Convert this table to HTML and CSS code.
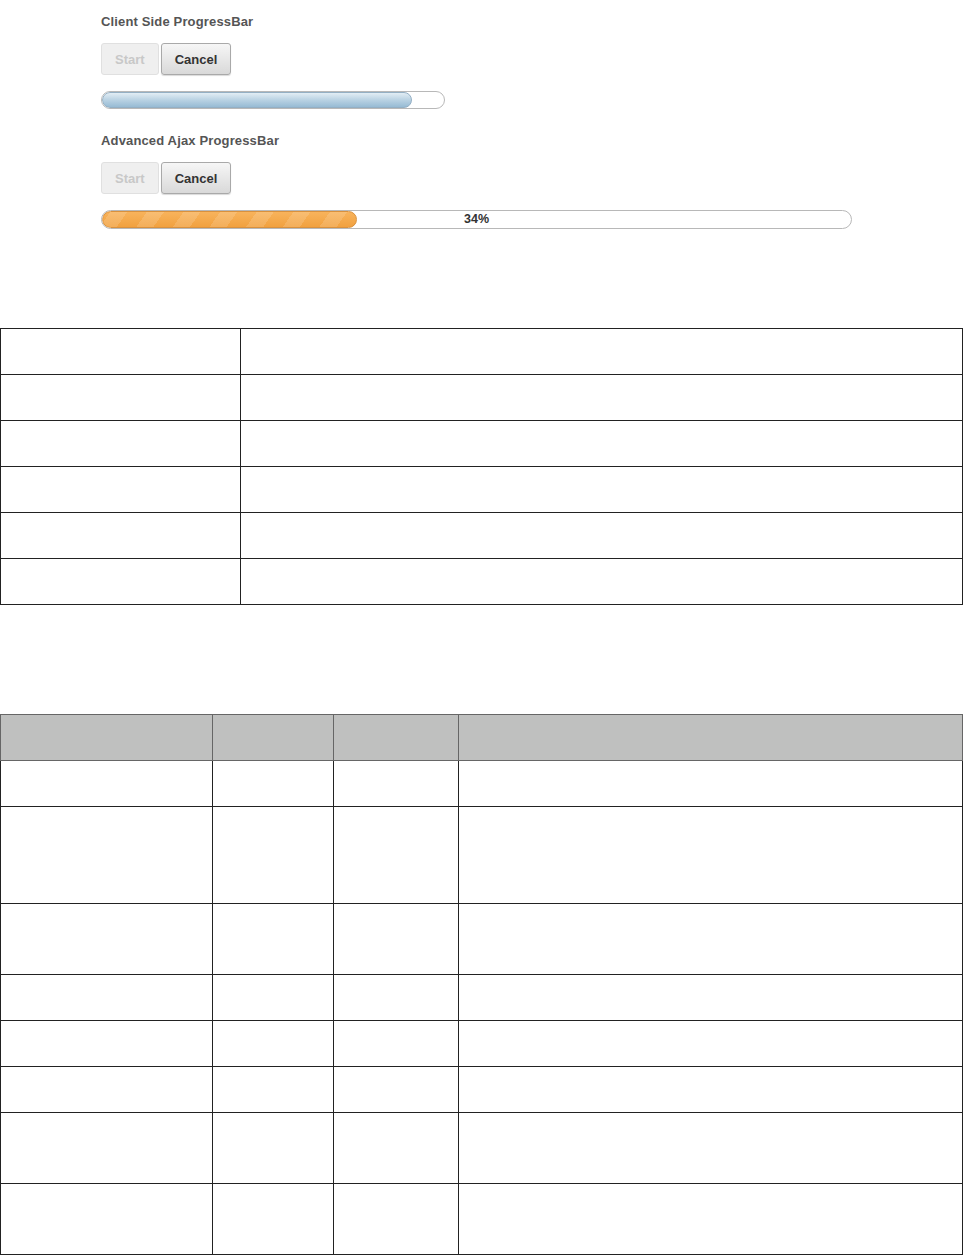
FILE: index.html
```html
<!DOCTYPE html>
<html lang="en">
<head>
    <meta charset="UTF-8">
    <title>ProgressBar</title>
    <link rel="stylesheet" href="styles.css">
</head>
<body>

<div class="demo">
    <h3>Client Side ProgressBar</h3>
    <div class="buttons">
        <button class="btn" disabled>Start</button>
        <button class="btn">Cancel</button>
    </div>
    <div class="bar bar-client">
        <div class="fill fill-blue" style="width: 310px"></div>
    </div>

    <h3 class="second">Advanced Ajax ProgressBar</h3>
    <div class="buttons">
        <button class="btn" disabled>Start</button>
        <button class="btn">Cancel</button>
    </div>
    <div class="bar bar-ajax">
        <div class="fill fill-orange" style="width: 34%"></div>
        <span class="label">34%</span>
    </div>
</div>

<table class="grid attrs">
    <tr><td class="c1"></td><td></td></tr>
    <tr><td class="c1"></td><td></td></tr>
    <tr><td class="c1"></td><td></td></tr>
    <tr><td class="c1"></td><td></td></tr>
    <tr><td class="c1"></td><td></td></tr>
    <tr><td class="c1"></td><td></td></tr>
</table>

<table class="grid api">
    <tr class="head"><th class="w1"></th><th class="w2"></th><th class="w3"></th><th></th></tr>
    <tr><td></td><td></td><td></td><td></td></tr>
    <tr class="tall"><td></td><td></td><td></td><td></td></tr>
    <tr class="mid"><td></td><td></td><td></td><td></td></tr>
    <tr><td></td><td></td><td></td><td></td></tr>
    <tr><td></td><td></td><td></td><td></td></tr>
    <tr><td></td><td></td><td></td><td></td></tr>
    <tr class="mid"><td></td><td></td><td></td><td></td></tr>
    <tr class="mid"><td></td><td></td><td></td><td></td></tr>
</table>

</body>
</html>
```

FILE: styles.css
```css
body {
    margin: 0;
    font-family: "Liberation Sans", Arial, sans-serif;
    background: #fff;
}
.demo {
    padding: 12px 0 0 101px;
}
h3 {
    margin: 0;
    font-size: 13px;
    line-height: 19px;
    font-weight: bold;
    color: #555;
    letter-spacing: 0.15px;
}
h3.second {
    margin-top: 22px;
}
.buttons {
    display: flex;
    gap: 2px;
    margin-top: 12px;
}
.btn {
    height: 32px;
    padding: 0 13px;
    font-family: inherit;
    font-size: 13px;
    font-weight: bold;
    color: #333;
    border: 1px solid #a9a9a9;
    border-radius: 3px;
    background: linear-gradient(#f6f6f6, #d9d9d9);
    box-shadow: 0 1px 1px rgba(0, 0, 0, 0.15);
}
.btn[disabled] {
    color: #c8c8c8;
    border-color: #e0e0e0;
    background: #efefef;
    box-shadow: none;
}
.bar {
    position: relative;
    margin-top: 16px;
    border: 1px solid #b8b8b8;
    border-radius: 10px;
    background: #fff;
    box-sizing: border-box;
    overflow: hidden;
}
.bar-client {
    width: 344px;
    height: 18px;
}
.bar-ajax {
    width: 751px;
    height: 19px;
}
.fill {
    height: 100%;
    border-radius: 10px;
    box-sizing: border-box;
}
.fill-blue {
    border: 1px solid #93afc4;
    background: linear-gradient(#e2edf4, #b9d2e3 50%, #97bbd4);
}
.fill-orange {
    border: 1px solid #d9913d;
    background:
        repeating-linear-gradient(-55deg, transparent 0 16px, rgba(255, 255, 255, 0.14) 16px 30px),
        linear-gradient(#f8b35c, #f1a13f);
}
.label {
    position: absolute;
    left: 0;
    right: 0;
    top: 0;
    text-align: center;
    font-size: 12.5px;
    line-height: 17px;
    font-weight: bold;
    color: #333;
}
.grid {
    width: 963px;
    border-collapse: collapse;
    border: 1px solid #333;
}
.grid td, .grid th {
    border: 1px solid #222;
    height: 45px;
    padding: 0;
}
.attrs {
    margin-top: 99px;
}
.attrs .c1 {
    width: 239px;
}
.api {
    margin-top: 109px;
}
.api .head th {
    background: #bfc0bf;
    border-color: #666;
}
.api .w1 { width: 211px; }
.api .w2 { width: 120px; }
.api .w3 { width: 124px; }
.api .tall td { height: 96px; }
.api .mid td { height: 70px; }
```
